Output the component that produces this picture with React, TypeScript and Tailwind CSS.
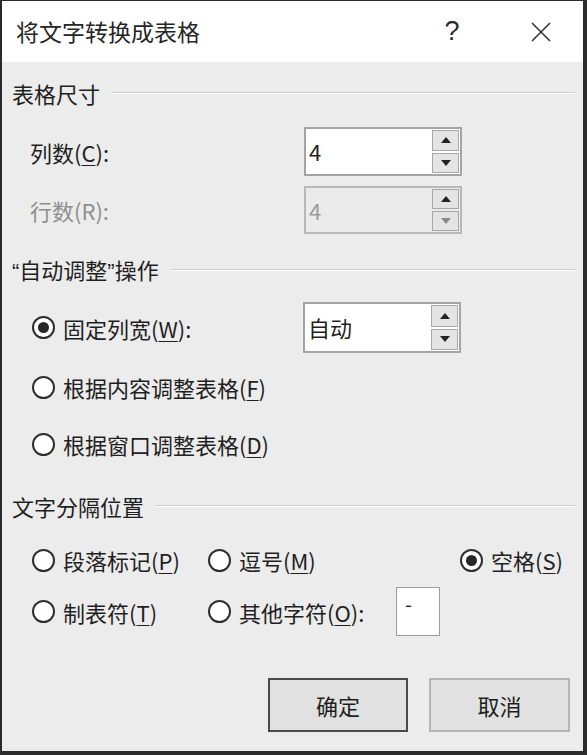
import React from "react";

function Radio({ checked = false }: { checked?: boolean }) {
  return (
    <div className="w-[23px] h-[23px] rounded-full border-2 border-[#2e2e2e] bg-white flex items-center justify-center shrink-0">
      {checked && <div className="w-[11px] h-[11px] rounded-full bg-[#262626]" />}
    </div>
  );
}

function Tri({ up, color }: { up: boolean; color: string }) {
  return (
    <svg width="10" height="6" viewBox="0 0 10 6">
      {up ? <polygon points="5,0 10,6 0,6" fill={color} /> : <polygon points="0,0 10,0 5,6" fill={color} />}
    </svg>
  );
}

function Spin({ value, disabled = false }: { value: string; disabled?: boolean }) {
  return (
    <div
      className={
        disabled
          ? "w-[158px] h-full border-2 border-[#b8b8b8] bg-[#ebebeb] flex items-stretch"
          : "w-[158px] h-full border-2 border-[#a4a4a4] bg-white flex items-stretch"
      }
    >
      <div className={disabled ? "flex-1 flex items-center pl-[3px] text-[22px] text-[#9a9a9a]" : "flex-1 flex items-center pl-[3px] text-[22px] text-[#1f1f1f]"}>
        {value}
      </div>
      <div className="w-[28px] flex flex-col gap-[2px] py-[1px] pr-[1px]">
        <div className="flex-1 border border-[#a8a8a8] bg-[#e4e4e4] flex items-center justify-center">
          <Tri up color="#222" />
        </div>
        <div className="flex-1 border border-[#a8a8a8] bg-[#e4e4e4] flex items-center justify-center">
          <Tri up={false} color={disabled ? "#8a8a8a" : "#222"} />
        </div>
      </div>
    </div>
  );
}

function Header({ children }: { children: React.ReactNode }) {
  return (
    <div className="h-[26px] flex items-center text-[22px] text-[#1f1f1f]">
      <span className="leading-none">{children}</span>
      <div className="flex-1 ml-[12px] mr-[8px] border-t border-[#cdcdcd] border-b border-b-white" />
    </div>
  );
}

function U({ c }: { c: string }) {
  return <span className="underline underline-offset-[3px] decoration-1">{c}</span>;
}

export default function App() {
  return (
    <div className="w-[587px] h-[755px] border-t border-l-2 border-r-4 border-b-4 border-[#2b2b2b] flex flex-col font-['Noto_Sans_CJK_SC','Noto_Sans',sans-serif] text-[#1f1f1f] overflow-hidden">
      <div className="h-[61px] bg-white flex items-center pl-[14px] shrink-0">
        <span className="text-[23px] text-[#262626] leading-none">将文字转换成表格</span>
        <div className="ml-auto w-[40px] text-center text-[27px] leading-none text-[#2a2a2a] font-['Liberation_Sans',sans-serif]">?</div>
        <div className="ml-[49px] mr-[22px] w-[40px] flex items-center justify-center">
          <svg width="22" height="22" viewBox="0 0 22 22">
            <line x1="2" y1="2" x2="20" y2="20" stroke="#333" strokeWidth="1.6" />
            <line x1="20" y1="2" x2="2" y2="20" stroke="#333" strokeWidth="1.6" />
          </svg>
        </div>
      </div>

      <div className="flex-1 bg-[#ececec] pl-[10px] flex flex-col">
        <div className="mt-[18px]">
          <Header>表格尺寸</Header>
        </div>

        <div className="mt-[21px] h-[49px] flex items-center">
          <div className="w-[292px] pl-[18px] text-[22px] leading-none">
            列数(<U c="C" />):
          </div>
          <Spin value="4" />
        </div>

        <div className="mt-[10px] h-[48px] flex items-center">
          <div className="w-[292px] pl-[18px] text-[22px] leading-none text-[#8f8f8f]">行数(R):</div>
          <Spin value="4" disabled />
        </div>

        <div className="mt-[23px]">
          <Header>
            <span className="font-['Liberation_Sans',sans-serif]">“</span>自动调整
            <span className="font-['Liberation_Sans',sans-serif]">”</span>操作
          </Header>
        </div>

        <div className="mt-[19px] h-[51px] flex items-center">
          <div className="w-[291px] pl-[20px] flex items-center gap-[8px] text-[22px] leading-none">
            <Radio checked />
            <span>
              固定列宽(<U c="W" />):
            </span>
          </div>
          <Spin value="自动" />
        </div>

        <div className="mt-[22px] h-[24px] pl-[20px] flex items-center gap-[8px] text-[22px] leading-none">
          <Radio />
          <span>
            根据内容调整表格(<U c="F" />)
          </span>
        </div>

        <div className="mt-[33px] h-[24px] pl-[20px] flex items-center gap-[8px] text-[22px] leading-none">
          <Radio />
          <span>
            根据窗口调整表格(<U c="D" />)
          </span>
        </div>

        <div className="mt-[37px]">
          <Header>文字分隔位置</Header>
        </div>

        <div className="mt-[29px] h-[24px] pl-[20px] grid grid-cols-[176px_252px_1fr] items-center text-[22px] leading-none">
          <div className="flex items-center gap-[8px]">
            <Radio />
            <span>
              段落标记(<U c="P" />)
            </span>
          </div>
          <div className="flex items-center gap-[8px]">
            <Radio />
            <span>
              逗号(<U c="M" />)
            </span>
          </div>
          <div className="flex items-center gap-[8px]">
            <Radio checked />
            <span>
              空格(<U c="S" />)
            </span>
          </div>
        </div>

        <div className="mt-[15px] h-[49px] pl-[20px] grid grid-cols-[176px_1fr] items-center text-[22px] leading-none">
          <div className="flex items-center gap-[8px]">
            <Radio />
            <span>
              制表符(<U c="T" />)
            </span>
          </div>
          <div className="flex items-center h-full">
            <div className="w-[188px] flex items-center gap-[8px]">
              <Radio />
              <span>
                其他字符(<U c="O" />):
              </span>
            </div>
            <div className="w-[44px] h-full border border-[#9c9c9c] bg-white pl-[8px] pt-[6px] text-[20px] leading-none">-</div>
          </div>
        </div>

        <div className="mt-[42px] h-[54px] flex justify-end gap-[21px] mr-[13px]">
          <div className="w-[140px] h-full border-2 border-[#4a4a4a] bg-[#e1e1e1] flex items-center justify-center text-[22px] leading-none">
            确定
          </div>
          <div className="w-[141px] h-full border-2 border-[#b4b4b4] bg-[#e1e1e1] flex items-center justify-center text-[22px] leading-none">
            取消
          </div>
        </div>
      </div>
    </div>
  );
}
